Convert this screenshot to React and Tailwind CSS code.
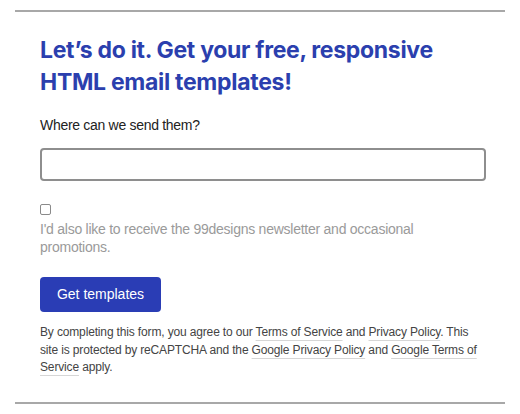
export default function App() {
  const link = 'underline decoration-[#d6d6d6] underline-offset-[4px]'
  return (
    <div className="w-[520px] h-[414px] bg-white font-['Liberation_Sans',Arial,sans-serif] pt-[10px] px-[15px]">
      <div className="border-t-2 border-[#a8a8a8]" />
      <div className="px-[25px] pt-[22px]">
        <h1 className="font-['Inter',sans-serif] font-bold text-[23px] leading-[32px] tracking-[-0.3px] text-[#2b3fae]">
          Let’s do it. Get your free, responsive HTML email templates!
        </h1>
        <label className="block mt-[17px] text-[14px] leading-[20px] tracking-[-0.3px] text-[#222]">
          Where can we send them?
        </label>
        <input
          type="text"
          className="block mt-[13px] w-[446px] h-[33px] border-2 border-[#8e8e8e] rounded-[4px] outline-none"
        />
        <div className="mt-[23px]">
          <span className="block w-[11px] h-[11px] border border-[#8a8a8a] rounded-[2px]" />
        </div>
        <p className="mt-[5px] text-[14px] leading-[18px] tracking-[-0.25px] text-[#9a9a9a]">
          I'd also like to receive the 99designs newsletter and occasional promotions.
        </p>
        <button className="mt-[21px] w-[121px] h-[35px] rounded-[4px] bg-[#2a3db5] text-white text-[14px]">
          Get templates
        </button>
        <p className="mt-[12px] text-[12px] leading-[17.5px] tracking-[-0.15px] text-[#444]">
          By completing this form, you agree to our <span className={link}>Terms of Service</span> and{' '}
          <span className={link}>Privacy Policy</span>. This site is protected by reCAPTCHA and the{' '}
          <span className={link}>Google Privacy Policy</span> and <span className={link}>Google Terms of Service</span>{' '}
          apply.
        </p>
      </div>
      <div className="mt-[25px] border-t-2 border-[#a8a8a8]" />
    </div>
  )
}
